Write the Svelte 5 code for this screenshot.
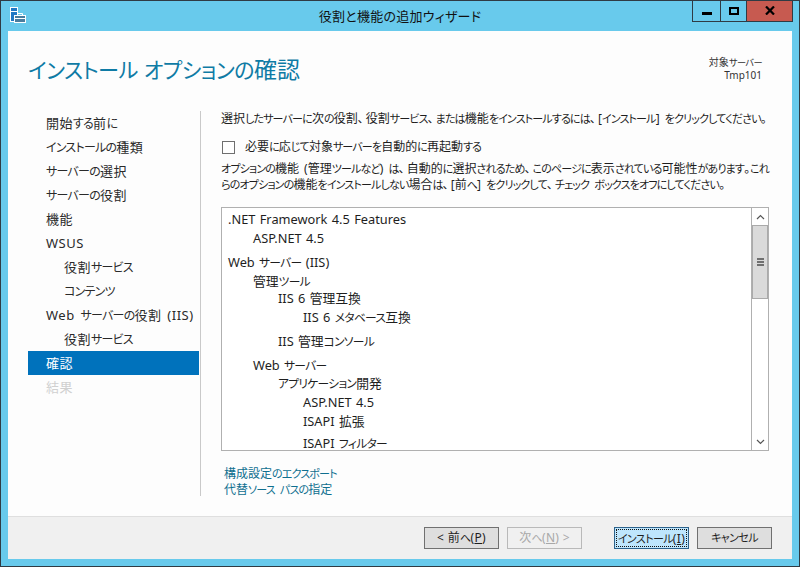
<script>
  const nav = [
    { t: '開始する前に' }, { t: 'インストールの種類' }, { t: 'サーバーの選択' }, { t: 'サーバーの役割' }, { t: '機能' }, { t: 'WSUS' },
    { t: '役割サービス', sub: true }, { t: 'コンテンツ', sub: true }, { t: 'Web サーバーの役割 (IIS)' }, { t: '役割サービス', sub: true },
    { t: '確認', active: true }, { t: '結果', disabled: true }
  ];
  const rows = [
    { t: '.NET Framework 4.5 Features', l: 0, h: 19 },
    { t: 'ASP.NET 4.5', l: 1, h: 24 },
    { t: 'Web サーバー (IIS)', l: 0, h: 19 },
    { t: '管理ツール', l: 1, h: 17 },
    { t: 'IIS 6 管理互換', l: 2, h: 19 },
    { t: 'IIS 6 メタベース互換', l: 3, h: 24 },
    { t: 'IIS 管理コンソール', l: 2, h: 24 },
    { t: 'Web サーバー', l: 1, h: 18 },
    { t: 'アプリケーション開発', l: 2, h: 19 },
    { t: 'ASP.NET 4.5', l: 3, h: 19 },
    { t: 'ISAPI 拡張', l: 3, h: 22 },
    { t: 'ISAPI フィルター', l: 3, h: 19 }
  ];
  const kanaRe = /([\u3040-\u30ff]+|、)/;
</script>

{#snippet txt(s)}{#each s.split(kanaRe) as p, i}{#if i % 2}<span class={p === '、' ? 'c' : 'k'}>{p}</span>{:else}{p}{/if}{/each}{/snippet}

<div class="window">
  <header class="titlebar">
    <svg class="appicon" width="16" height="16" viewBox="0 0 16 16">
      <rect x="0.500" y="0.500" width="7" height="14" fill="#1f78c4" stroke="#fff"/>
      <path d="M1 4.500h6" stroke="#fff"/>
      <rect x="4.500" y="8.500" width="11" height="7" fill="#4a7d9e" stroke="#fff"/>
      <path d="M7.500 8V6.500h5V8M5 11.500h10" stroke="#fff" fill="none"/>
    </svg>
    <div class="title">役割と機能の追加ウィザード</div>
    <div class="controls">
      <div class="ctl min"><span></span></div>
      <div class="ctl max"><span></span></div>
      <div class="ctl close">
        <svg width="10" height="9" viewBox="0 0 10 9"><path d="M1 0.500 L9 8.500 M9 0.500 L1 8.500" stroke="#000" stroke-width="2.200"/></svg>
      </div>
    </div>
  </header>

  <div class="client">
    <div class="head">
      <h1>{@render txt('インストール オプションの確認')}</h1>
      <div class="target">{@render txt('対象サーバー')}<br />Tmp101</div>
    </div>
    <div class="body">
      <nav class="nav">
        {#each nav as n}
          <div class="item" class:sub={n.sub} class:active={n.active} class:disabled={n.disabled}>{@render txt(n.t)}</div>
        {/each}
      </nav>
      <main class="main">
        <p class="para">{@render txt('選択したサーバーに次の役割、役割サービス、または機能をインストールするには、[インストール] をクリックしてください。')}</p>
        <label class="check para"><span class="box"></span><span>{@render txt('必要に応じて対象サーバーを自動的に再起動する')}</span></label>
        <p class="para note">{@render txt('オプションの機能 (管理ツールなど) は、自動的に選択されるため、このページに表示されている可能性があります。これ')}<br />{@render txt('らのオプションの機能をインストールしない場合は、[前へ] をクリックして、チェック ボックスをオフにしてください。')}</p>
        <div class="list">
          <div class="rows">
            {#each rows as r}
              <div class="row l{r.l}" style="height:{r.h}px">{@render txt(r.t)}</div>
            {/each}
          </div>
          <div class="scroll">
            <div class="arrow up"><svg width="9" height="6" viewBox="0 0 9 6"><path d="M1 5 L4.500 1.500 L8 5" fill="none" stroke="#555" stroke-width="1.200"/></svg></div>
            <div class="thumb"><i></i><i></i><i></i></div>
            <div class="track"></div>
            <div class="arrow down"><svg width="9" height="6" viewBox="0 0 9 6"><path d="M1 1 L4.500 4.500 L8 1" fill="none" stroke="#555" stroke-width="1.200"/></svg></div>
          </div>
        </div>
        <div class="links para">
          <span>{@render txt('構成設定のエクスポート')}</span>
          <span>{@render txt('代替ソース パスの指定')}</span>
        </div>
      </main>
    </div>
    <footer class="footer">
      <button class="btn">&lt; {@render txt('前へ')}(<u>P</u>)</button>
      <button class="btn off">{@render txt('次へ')}(<u>N</u>) &gt;</button>
      <button class="btn primary"><span class="focus">{@render txt('インストール')}(<u>I</u>)</span></button>
      <button class="btn">{@render txt('キャンセル')}</button>
    </footer>
  </div>
</div>

<style>
  :global(body) { margin: 0; background: #68caec; }
  * { box-sizing: border-box; }
  .window {
    width: 800px; height: 567px; background: #68caec;
    border: 1px solid #2f3b44;
    display: flex; flex-direction: column;
    font-family: "Noto Sans", "Noto Sans CJK JP", sans-serif;
    font-feature-settings: "palt";
    font-size: 12px; color: #1e1e1e; overflow: hidden;
  }
  .titlebar { height: 30px; display: flex; position: relative; flex: none; }
  .appicon { margin: 6px 0 0 9px; }
  .title { position: absolute; left: 0; right: 0; top: 5px; text-align: center; font-size: 13px; letter-spacing: 0.250px; line-height: 20px; color: #111; }
  .controls { position: absolute; right: 6px; top: -1px; display: flex; height: 22px; border: 1px solid #2f3b44; border-top: none; }
  .ctl { height: 21px; display: flex; align-items: center; justify-content: center; border-left: 1px solid #2f3b44; }
  .ctl:first-child { border-left: none; }
  .min { width: 27px; }
  .min span { width: 10px; height: 3px; background: #000; margin-top: 5px; }
  .max { width: 26px; }
  .max span { width: 10px; height: 8px; border: 2px solid #000; }
  .close { width: 46px; background: #c75a50; }

  .k { font-size: 0.920em; letter-spacing: -0.060em; }
  .c { letter-spacing: 2px; }

  .client { margin: 0 7px 7px; flex: 1; background: #fdfdfd; display: flex; flex-direction: column; min-height: 0; }
  .head { height: 80px; flex: none; display: flex; justify-content: space-between; padding: 23px 30px 0 20px; }
  h1 { margin: 0; font-size: 23px; line-height: 30px; font-weight: 400; color: #0f7ba5; }
  h1 .k { letter-spacing: -0.025em; }
  .target { text-align: right; font-size: 10px; line-height: 13px; padding-top: 2px; color: #333; }

  .body { flex: 1; display: flex; min-height: 0; }
  .nav { width: 171px; margin-left: 20px; flex: none; }
  .item { height: 24px; line-height: 24px; padding-left: 18px; font-size: 13px; letter-spacing: 0.500px; color: #2a2a2a; white-space: nowrap; word-spacing: 2px; }
  .item.sub { padding-left: 36px; }
  .item.active { background: #0072bc; color: #fff; }
  .item.disabled { color: #d0d0d0; }
  .main { margin-left: 1px; margin-bottom: 20px; border-left: 1px solid #c9c9c9; padding-left: 20px; width: 570px; }
  .para { margin: 0; font-size: 12px; line-height: 16px; white-space: nowrap; word-spacing: 2px; }
  .para .k { letter-spacing: -0.078em; }
  .check { display: flex; align-items: center; margin-top: 12px; height: 16px; }
  .box { width: 13px; height: 13px; border: 1px solid #6f6f6f; background: #fff; margin: 0 10px 0 1px; flex: none; }
  .note { margin: 6px 0 0; }
  .list { margin-top: 14px; width: 548px; height: 244px; border: 1px solid #b0b0b0; background: #fff; display: flex; overflow: hidden; }
  .rows { flex: 1; padding-top: 2px; font-size: 12.800px; overflow: hidden; word-spacing: 1px; }
  .row { line-height: 19px; white-space: nowrap; }
  .l0 { padding-left: 6px; }
  .l1 { padding-left: 31px; }
  .l2 { padding-left: 56px; }
  .l3 { padding-left: 81px; }
  .scroll { width: 17px; border-left: 1px solid #b0b0b0; display: flex; flex-direction: column; flex: none; }
  .arrow { height: 17px; display: flex; align-items: center; justify-content: center; flex: none; background: #fff; }
  .thumb { height: 74px; background: #dadada; border: 1px solid #aaa; flex: none; display: flex; flex-direction: column; align-items: center; justify-content: center; gap: 1px; }
  .thumb i { width: 7px; height: 2px; background: #707070; }
  .track { flex: 1; background: #fff; }
  .links { margin-top: 15px; display: flex; flex-direction: column; padding-left: 3px; color: #0f6f8f; }

  .footer { height: 43px; flex: none; background: #f0f0f0; border-top: 1px solid #dfdfdf; display: flex; padding: 10px 20px 0 416px; }
  .btn { width: 75px; height: 22px; border: 1px solid #707070; background: #dedede; font: inherit; font-feature-settings: "palt"; font-size: 12px; letter-spacing: 0.300px; color: #1e1e1e; padding: 0; margin: 0 8px 0 0; line-height: 20px; white-space: nowrap; }
  .btn.off { border-color: #b9b9b9; background: #f0f0f0; color: #a8a8a8; margin-right: 32px; }
  .btn.primary { background: #bee6fd; border-color: #2c628b; padding: 1px; }
  .focus { display: block; height: 18px; line-height: 17px; border: 1px dotted #111; }
  .btn:last-child { margin-right: 0; }
</style>
